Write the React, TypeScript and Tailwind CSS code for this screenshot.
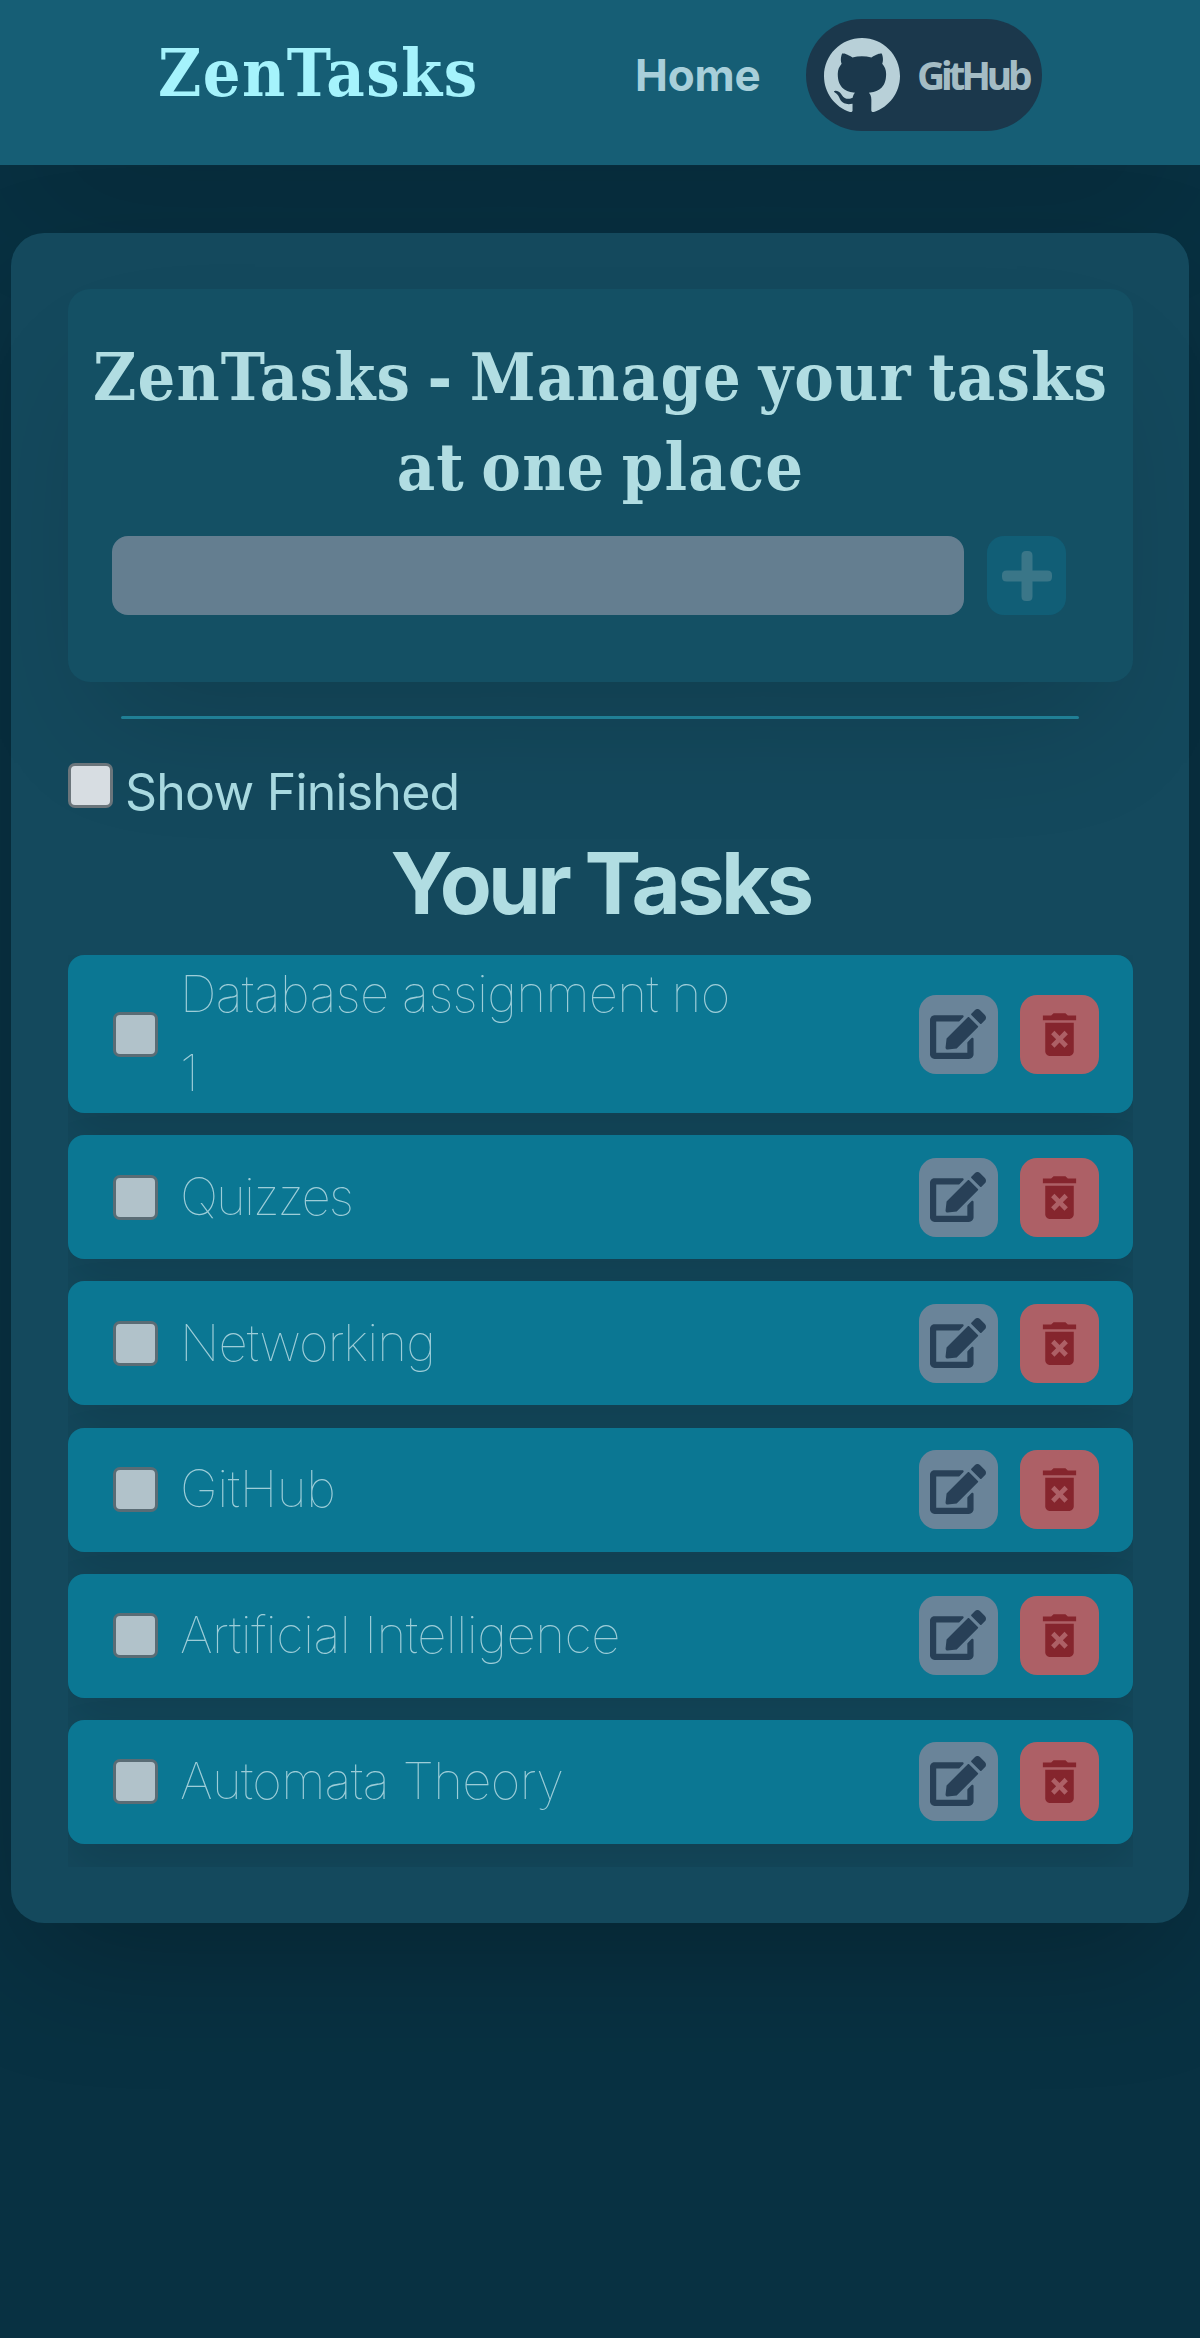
import { FaEdit } from "react-icons/fa";
import { MdDeleteForever } from "react-icons/md";
import { SiGithub } from "react-icons/si";

const tasks = [
  { label: "Database assignment no 1", spacing: "tracking-[-0.7px]" },
  { label: "Quizzes", spacing: "tracking-[-2px]" },
  { label: "Networking", spacing: "tracking-[-0.9px]" },
  { label: "GitHub", spacing: "tracking-[-0.4px]" },
  { label: "Artificial Intelligence", spacing: "tracking-[-0.5px]" },
  { label: "Automata Theory", spacing: "tracking-[-0.7px]" },
];

function TaskRow({ label, spacing, tall }: { label: string; spacing: string; tall: boolean }) {
  return (
    <li
      className={`flex shrink-0 items-center rounded-[16px] bg-[#0b7793] pl-[45px] pr-[34px] shadow-[0_24px_50px_rgba(0,0,0,0.12)] ${
        tall ? "h-[158px]" : "h-[124px]"
      }`}
    >
      <span className="size-[45px] shrink-0 rounded-[7px] border-[3px] border-[#5a6c75] bg-[#b1c2ca]" />
      <span
        className={`-mt-[2px] ml-[22px] w-[566px] font-['Inter',sans-serif] text-[51px] font-[130] leading-[79px] text-[#9dcdd8] ${spacing}`}
      >
        {label}
      </span>
      <button className="ml-auto flex h-[79px] w-[79px] items-center justify-center rounded-[17px] bg-[#6a8499] text-[#284057]">
        <FaEdit className="-mt-[1px] mr-[2px] h-[50px] w-[56px]" />
      </button>
      <button className="ml-[22px] flex h-[79px] w-[79px] items-center justify-center rounded-[17px] bg-[#ad6066] text-[#85252d]">
        <MdDeleteForever className="size-[57px]" />
      </button>
    </li>
  );
}

export default function App() {
  return (
    <div className="h-[2338px] w-[1200px] overflow-hidden bg-[#083142]">
      <header className="flex h-[165px] bg-[#165e75] pl-[158px] pt-[19px] font-['Inter',sans-serif] shadow-[0_66px_131px_-31px_rgba(0,0,0,0.15)]">
        <h1 className="w-[477px] font-['DejaVu_Serif_Condensed','DejaVu_Serif',serif] text-[66px] font-bold leading-[108px] tracking-[1.500px] [font-stretch:condensed] text-[#a5f3fc]">
          ZenTasks
        </h1>
        <nav className="flex">
          <a className="w-[171px] text-[44px] font-bold leading-[112px] tracking-[-0.200px] text-[#a8cfda]">Home</a>
          <a className="flex h-[112px] w-[236px] items-center rounded-[56px] bg-[#1b384c] pl-[18px]">
            <SiGithub className="size-[76px] shrink-0 text-[#b8d0d8]" />
            <span className="ml-[17px] font-['Noto_Sans',sans-serif] text-[39px] font-bold tracking-[-4.200px] text-[#a4bcc4]">
              GitHub
            </span>
          </a>
        </nav>
      </header>

      <main className="mx-[11px] mt-[68px] h-[1690px] rounded-[33px] bg-[#14495d] pl-[57px] pr-[56px] pt-[56px] shadow-[0_50px_131px_-20px_rgba(0,0,0,0.25)]">
        <section className="h-[393px] rounded-[22px] bg-[#145064] pt-[43px] shadow-[0_66px_131px_-31px_rgba(0,0,0,0.16)]">
          <h2 className="text-center font-['DejaVu_Serif_Condensed','DejaVu_Serif',serif] text-[66px] font-bold leading-[90px] tracking-[1.200px] [font-stretch:condensed] [word-spacing:-5.500px] text-[#b1dde2]">
            ZenTasks - Manage your tasks
            <br />
            at one place
          </h2>
          <div className="ml-[44px] mt-[24px] flex gap-[23px]">
            <div className="h-[79px] w-[852px] rounded-[16px] bg-[#647e90]" />
            <button className="flex size-[79px] items-center justify-center rounded-[17px] bg-[#115e76] text-[#3a7688]">
              <svg viewBox="0 0 50 50" className="size-[50px]" fill="currentColor">
                <path d="M24 0h2q4.500 0 4.500 4.500V19.500H45.500Q50 19.500 50 24v2q0 4.500-4.500 4.500H30.500V45.500Q30.500 50 26 50h-2q-4.500 0-4.500-4.500V30.500H4.500Q0 30.500 0 26v-2q0-4.500 4.500-4.500H19.500V4.500Q19.500 0 24 0z" />
              </svg>
            </button>
          </div>
        </section>

        <div className="ml-[53px] mt-[34px] h-[3px] w-[958px] rounded-full bg-[#207f95]" />

        <label className="mt-[44px] flex h-[64px] font-['Inter',sans-serif]">
          <span className="size-[45px] rounded-[7px] border-[3px] border-[#6b757b] bg-[#d7dde2]" />
          <span className="ml-[12px] text-[50px] leading-[58px] tracking-[-0.800px] text-[#a8d9e0]">Show Finished</span>
        </label>

        <h2 className="h-[128px] text-center font-['Inter',sans-serif] text-[85px] font-bold leading-[114px] tracking-[-3.700px] text-[#b1dde2]">
          Your Tasks
        </h2>

        <ul className="flex h-[912px] flex-col gap-[22.200px] overflow-hidden">
          {tasks.map((task, i) => (
            <TaskRow key={task.label} label={task.label} spacing={task.spacing} tall={i === 0} />
          ))}
        </ul>
      </main>
    </div>
  );
}
